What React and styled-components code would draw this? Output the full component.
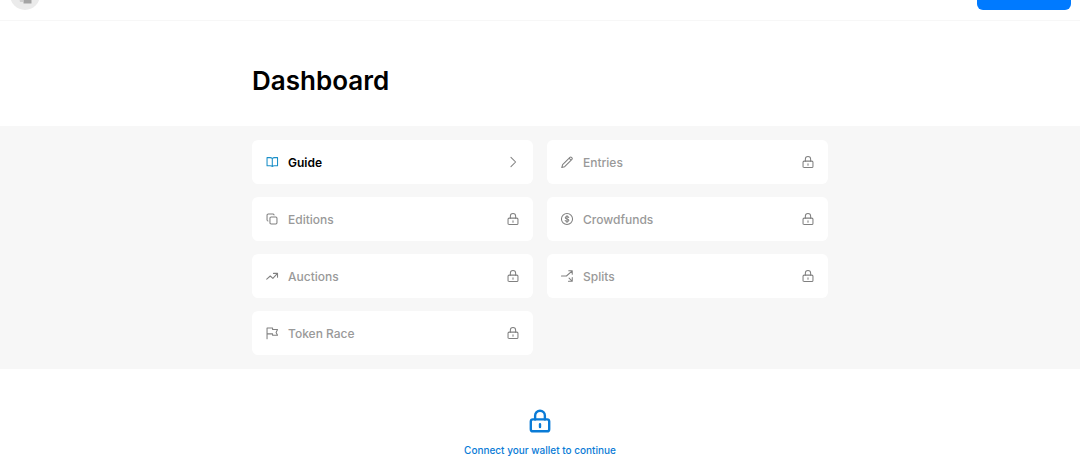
import React from 'react'
import styled, { createGlobalStyle } from 'styled-components'

const GlobalStyle = createGlobalStyle`
  * {
    box-sizing: border-box;
  }

  body {
    margin: 0;
    background-color: #fff;
    color: #000;
    font-family: Inter, "Liberation Sans", sans-serif;
    -webkit-font-smoothing: antialiased;
  }
`

const Header = styled.header`
  display: flex;
  align-items: center;
  justify-content: space-between;
  margin-top: -30px;
  padding: 10px 9px;
  border-bottom: 1px solid #f7f7f7;
`

const Avatar = styled.a`
  display: block;
  width: 32px;
  height: 30px;

  svg {
    display: block;
  }
`

const WalletButton = styled.button`
  width: 94px;
  height: 30px;
  border: none;
  border-radius: 6px;
  background-color: #007aff;
  cursor: pointer;
`

const Container = styled.div`
  max-width: 608px;
  margin: 0 auto;
  padding: 0 16px;
`

const Title = styled.h1`
  margin: 0;
  padding: 43px 0 28px;
  font-size: 26px;
  font-weight: 600;
  line-height: 34px;
`

const Panel = styled.section`
  background-color: #f7f7f7;
  padding: 14px 0;
`

const Grid = styled.nav`
  display: grid;
  grid-template-columns: 1fr 1fr;
  gap: 13px 14px;
`

const Card = styled.a`
  display: flex;
  align-items: center;
  gap: 9px;
  height: 44px;
  padding: 0 13px;
  border-radius: 6px;
  background-color: #fff;
  color: ${(props) => (props.$active ? '#000' : '#999')};
  font-size: 12px;
  font-weight: ${(props) => (props.$active ? 600 : 500)};
  text-decoration: none;

  svg:first-child {
    color: ${(props) => (props.$active ? '#1a8fc8' : '#808080')};
  }

  svg:last-child {
    color: #808080;
  }
`

const CardLabel = styled.span`
  flex: 1;
`

const Connect = styled.a`
  display: flex;
  flex-direction: column;
  align-items: center;
  gap: 9px;
  padding: 39px 0 8px;
  color: #0a7bd6;
  font-size: 10px;
  font-weight: 500;
  line-height: 14px;
  text-decoration: none;
`

const Icon = ({ size = 14, stroke = 1.8, children }) => (
  <svg
    width={size}
    height={size}
    viewBox="0 0 24 24"
    fill="none"
    stroke="currentColor"
    strokeWidth={stroke}
    strokeLinecap="round"
    strokeLinejoin="round"
    aria-hidden="true"
  >
    {children}
  </svg>
)

const LockIcon = (props) => (
  <Icon {...props}>
    <rect x="3.5" y="10.5" width="17" height="11" rx="2" />
    <path d="M7.500 10.500V7a4.500 4.500 0 0 1 9 0v3.500M12 15v2.500" />
  </Icon>
)

const icons = {
  guide: <path d="M12.500 6v13.500M12.500 6c-1-1-2-1.500-3.500-1.500H3.500v14H9c1.500 0 2.700.2 3.500 1 .8-.8 2-1 3.500-1h5.500v-14H16c-1.500 0-2.500.5-3.500 1.500z" />,
  entries: <path d="M3 21.500l1.500-5L17 4a1.800 1.800 0 0 1 2.600 0l.9.9a1.800 1.800 0 0 1 0 2.600L8 20l-5 1.500zM15.500 5.500l3.500 3.500" />,
  editions: (
    <>
      <rect x="8.500" y="8.500" width="12" height="12" rx="2" />
      <path d="M5 15.500A2 2 0 0 1 3.500 13.500V5.500a2 2 0 0 1 2-2h8a2 2 0 0 1 2 1.500" />
    </>
  ),
  crowdfunds: (
    <>
      <circle cx="12" cy="12" r="9.5" />
      <path d="M15 9.500c-.4-1.200-1.500-1.800-3-1.800-1.700 0-3 .8-3 2.100 0 3 6.200 1.500 6.200 4.500 0 1.300-1.400 2.100-3.200 2.100-1.600 0-2.800-.6-3.200-1.900M12 6v12" />
    </>
  ),
  auctions: <path d="M3 17.500l6-5.500 4.500 4L21 8M14.500 7.500h7V14" />,
  splits: <path d="M2.500 12H11l9.500-8.500M15 3h6v6M15.500 15.500l5.500 5.500M14.500 21H21v-6.500" />,
  race: <path d="M3.500 22V3.500h9.500V6h8.500l-2.500 5 2.500 5H13v-2.500H3.500" />
}

const items = [
  { name: 'Guide', icon: 'guide', active: true },
  { name: 'Entries', icon: 'entries' },
  { name: 'Editions', icon: 'editions' },
  { name: 'Crowdfunds', icon: 'crowdfunds' },
  { name: 'Auctions', icon: 'auctions' },
  { name: 'Splits', icon: 'splits' },
  { name: 'Token Race', icon: 'race' }
]

export default function App() {
  return (
    <>
      <GlobalStyle />
      <Header>
        <Avatar href="/#" aria-label="Home">
          <svg width="32" height="30" viewBox="0 0 32 30" aria-hidden="true">
            <circle cx="16" cy="15" r="15" fill="#ebebeb" />
            <path d="M9 12h5v10h-3z" fill="#cfcfcf" />
            <path d="M14.500 12h8v11.500h-8z" fill="#a4a4a4" />
          </svg>
        </Avatar>
        <WalletButton type="button" aria-label="Connect wallet" />
      </Header>
      <main>
        <Container>
          <Title>Dashboard</Title>
        </Container>
        <Panel>
          <Container>
            <Grid>
              {items.map((item) => (
                <Card key={item.name} href="/#" $active={item.active}>
                  <Icon>{icons[item.icon]}</Icon>
                  <CardLabel>{item.name}</CardLabel>
                  {item.active ? <Icon><path d="M8.500 4l8 8-8 8" /></Icon> : <LockIcon />}
                </Card>
              ))}
            </Grid>
          </Container>
        </Panel>
        <Connect href="/#">
          <LockIcon size={26} stroke={2.2} />
          Connect your wallet to continue
        </Connect>
      </main>
    </>
  )
}
